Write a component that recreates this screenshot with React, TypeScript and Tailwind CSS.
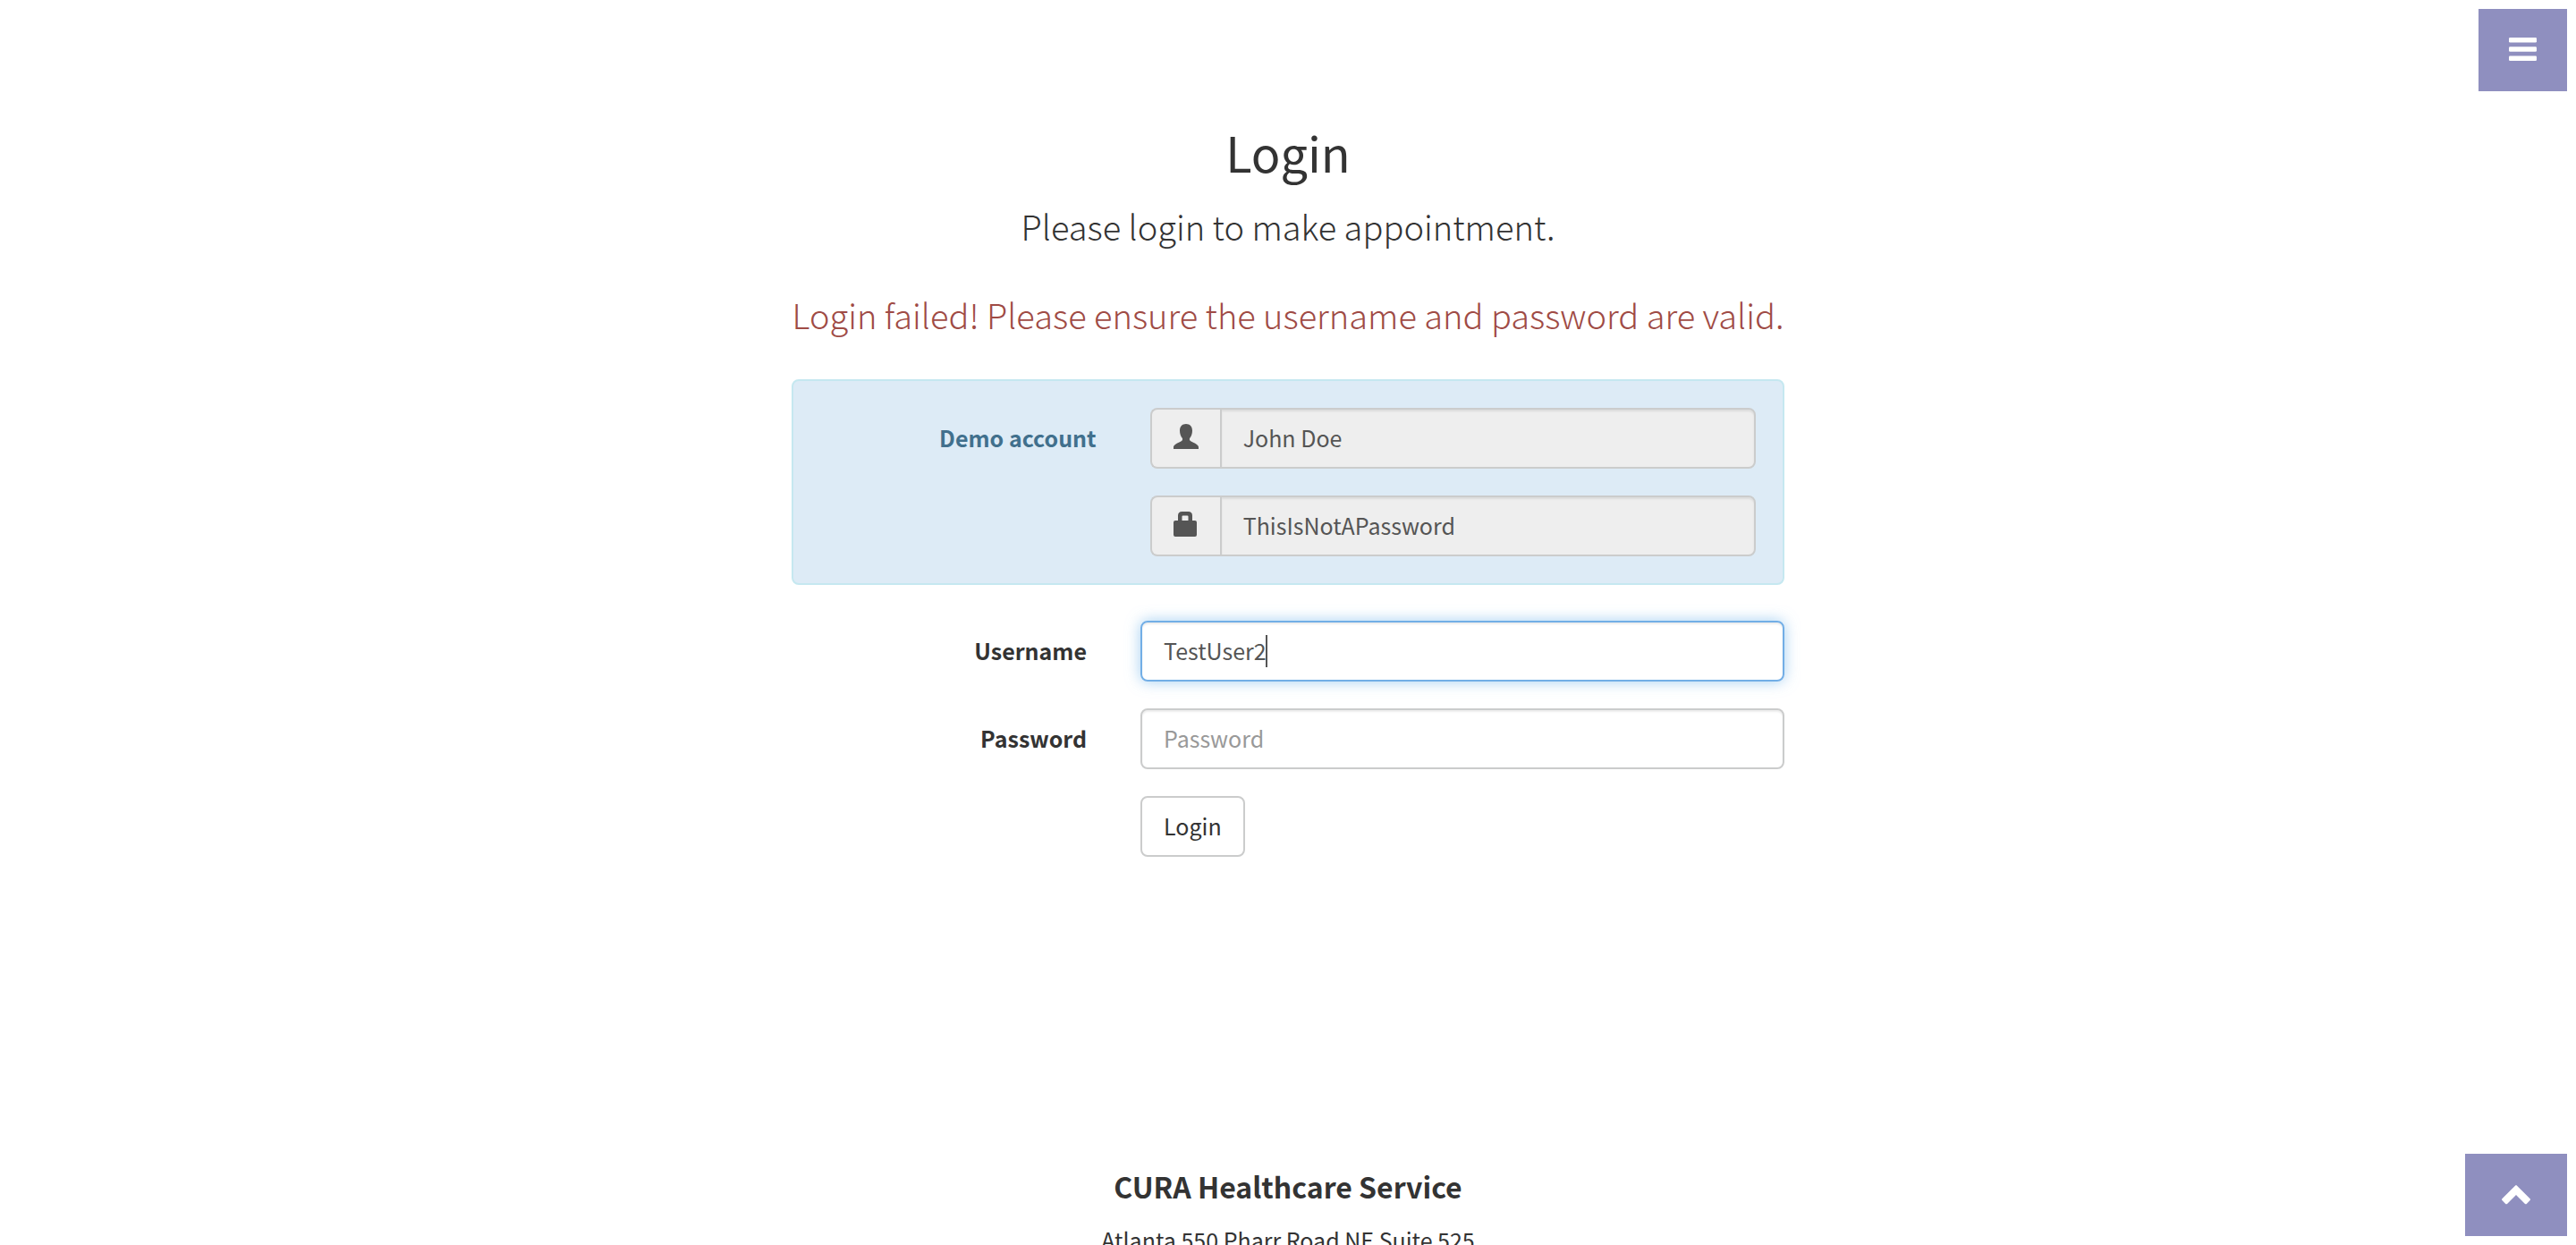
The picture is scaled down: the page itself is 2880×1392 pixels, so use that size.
import React from "react";

const inputBase =
  "block h-[68px] w-full min-w-0 border-2 border-[#cbcccc] px-6 pb-0.5 text-[25px] leading-10 text-[#555] shadow-[inset_0_2px_2px_rgba(0,0,0,0.075)] outline-none placeholder:text-[#999]";

function UserIcon() {
  return (
    <svg aria-hidden="true" viewBox="0 0 28 28" className="h-7 w-7 fill-current">
      <path d="M14 0c4.200 0 7 2.700 7 7.400 0 3.600-1.200 6.500-2.700 8.300-.6.800-.5 2.300.3 3 2.500 1.900 9.400 4.100 9.400 7V28H0v-2.300c0-2.900 6.900-5.100 9.400-7 .8-.7.9-2.200.3-3C8.200 13.900 7 11 7 7.400 7 2.700 9.800 0 14 0z" />
    </svg>
  );
}

function LockIcon() {
  return (
    <svg aria-hidden="true" viewBox="0 0 28 28" className="h-7 w-7 fill-current">
      <path
        fillRule="evenodd"
        d="M9.500 0h7Q21 0 21 4.500V10h3q2 0 2 2v14q0 2-2 2H2q-2 0-2-2V12q0-2 2-2h3V4.500Q5 0 9.500 0zM10.500 4.500Q9.500 4.500 9.500 5.500V10h7V5.500q0-1-1-1z"
      />
    </svg>
  );
}

function DemoField({ id, label, value, icon }: { id: string; label: string; value: string; icon: React.ReactNode }) {
  return (
    <div className="flex">
      <span className="flex w-[78px] shrink-0 items-start rounded-l-lg border-2 border-r-0 border-[#cbcccc] bg-[#eee] pt-4 pl-6 text-[#555]">
        {icon}
      </span>
      <input id={id} aria-label={label} readOnly value={value} className={`${inputBase} rounded-r-lg bg-[#eee]`} />
    </div>
  );
}

export default function App() {
  return (
    <div className="h-screen overflow-hidden bg-white font-['Noto_Sans_CJK_SC','Source_Sans_Pro',sans-serif] text-[25px] leading-10 text-[#333]">
      <button
        type="button"
        aria-label="Open menu"
        className="fixed top-[10px] right-[10px] flex h-[92px] w-[99px] items-center justify-center bg-[#8f8fbf] pb-0.5 text-white"
      >
        <svg aria-hidden="true" viewBox="0 0 31 26" className="h-[26px] w-[31px] fill-current">
          <rect width="31" height="5.500" rx="1.300" />
          <rect y="10.200" width="31" height="5.500" rx="1.300" />
          <rect y="20.500" width="31" height="5.500" rx="1.300" />
        </svg>
      </button>

      <main className="mx-auto w-full max-w-[2340px] px-[30px] pt-[137px]">
        <section className="text-center">
          <h2 className="text-[54px] leading-[66px]">Login</h2>
          <p className="mt-5 text-[38px] leading-[60px] font-light">Please login to make appointment.</p>
          <p className="mt-[39px] text-[38px] leading-[60px] font-light text-[#9f4b45]">
            Login failed! Please ensure the username and password are valid.
          </p>
        </section>

        <form className="mx-auto mt-[42px] w-full max-w-[1110px]" onSubmit={(e) => e.preventDefault()}>
          <div className="grid grid-cols-[1fr_2fr] rounded-lg border-2 border-[#c5e8f0] bg-[#ddebf6] py-[30px]">
            <label htmlFor="demo-user" className="px-[30px] pt-[13px] text-right font-bold text-[#41708d]">
              Demo account
            </label>
            <div className="flex flex-col gap-[30px] px-[30px]">
              <DemoField id="demo-user" label="Demo username" value="John Doe" icon={<UserIcon />} />
              <DemoField id="demo-pass" label="Demo password" value="ThisIsNotAPassword" icon={<LockIcon />} />
            </div>
          </div>

          <div className="-mx-[30px] mt-10 grid grid-cols-[1fr_2fr] items-center gap-y-[30px]">
            <label htmlFor="username" className="px-[30px] pb-0.5 text-right font-bold">
              Username
            </label>
            <div className="relative mx-[30px]">
              <input
                id="username"
                defaultValue="TestUser2"
                className="block h-[68px] w-full rounded-lg border-2 border-[#72aee6] px-6 pb-0.5 text-[25px] leading-10 text-[#555] caret-transparent shadow-[inset_0_2px_2px_rgba(0,0,0,0.075),0_0_16px_rgba(102,175,233,0.6)] outline-none"
              />
              <span aria-hidden="true" className="absolute top-4 left-[140px] h-9 w-0.5 bg-[#555]" />
            </div>

            <label htmlFor="password" className="px-[30px] pb-0.5 text-right font-bold">
              Password
            </label>
            <div className="mx-[30px]">
              <input id="password" type="password" placeholder="Password" className={`${inputBase} rounded-lg bg-white`} />
            </div>

            <div className="col-start-2 mx-[30px]">
              <button type="submit" className="block h-[68px] rounded-lg border-2 border-[#cbcccc] bg-white px-6 pb-0.5">
                Login
              </button>
            </div>
          </div>
        </form>
      </main>

      <footer className="mt-[348px] text-center">
        <h4 className="text-[32px] leading-10 font-bold">CURA Healthcare Service</h4>
        <p className="mt-5">Atlanta 550 Pharr Road NE Suite 525</p>
      </footer>

      <a
        href="#top"
        aria-label="Back to top"
        className="fixed right-[10px] bottom-[10px] flex h-[92px] w-[114px] items-center justify-center bg-[#8f8fbf] text-white"
      >
        <svg aria-hidden="true" viewBox="0 0 32 22" className="h-[22px] w-8 fill-current">
          <path d="M15.200.4q.8-.8 1.600 0L31.600 15.200q.8.900 0 1.800l-3.800 3.900q-.9.800-1.800 0L16 11 6 20.900q-.9.800-1.800 0L.4 17q-.8-.9 0-1.800z" />
        </svg>
      </a>
    </div>
  );
}
